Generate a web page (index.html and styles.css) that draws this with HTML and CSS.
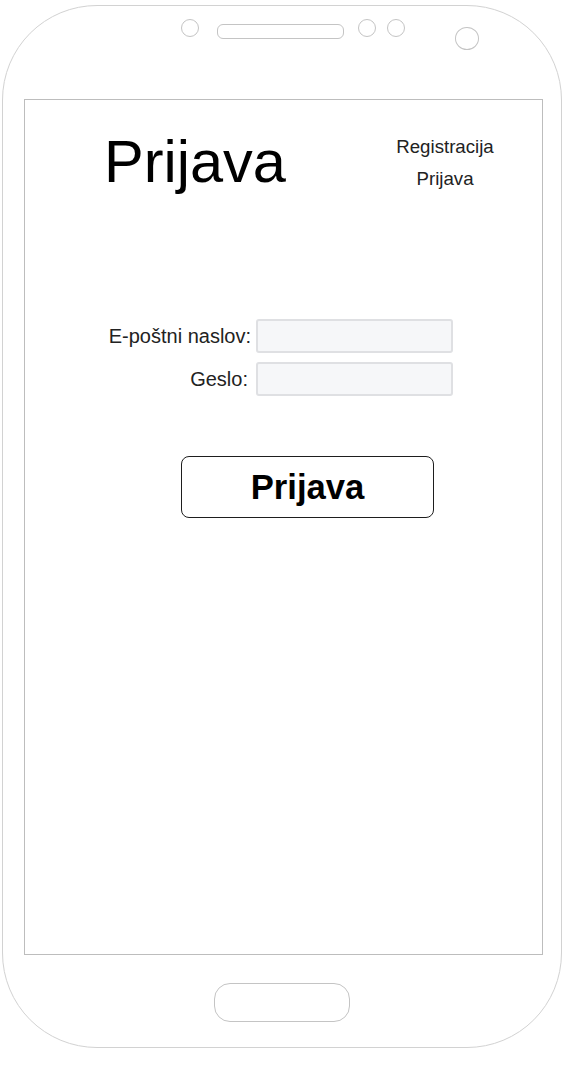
FILE: index.html
```html
<!DOCTYPE html>
<html lang="hr">
<head>
<meta charset="utf-8">
<title>Prijava</title>
<link rel="stylesheet" href="styles.css">
</head>
<body>
<div class="phone">
  <div class="sensors">
    <span class="dot"></span>
    <span class="speaker"></span>
    <span class="dot dot-a"></span>
    <span class="dot dot-b"></span>
    <span class="camera"></span>
  </div>
  <div class="screen">
    <header class="header">
      <h1 class="title">Prijava</h1>
      <nav class="nav">
        <a class="nav-link" href="#">Registracija</a>
        <a class="nav-link" href="#">Prijava</a>
      </nav>
    </header>
    <form class="form">
      <label class="label" for="email">E-poštni naslov:</label>
      <input class="field" id="email" type="email">
      <label class="label label-short" for="pass">Geslo:</label>
      <input class="field" id="pass" type="password">
    </form>
    <button class="btn" type="button">Prijava</button>
  </div>
  <div class="home"></div>
</div>
</body>
</html>
```
FILE: styles.css
```css
* { box-sizing: border-box; }
html, body { margin: 0; padding: 0; background: #fff; }
body { font-family: "Liberation Sans", Arial, sans-serif; color: #222; }

.phone {
  margin: 5px 0 0 2px;
  width: 560px;
  height: 1043px;
  border: 1px solid #d2d2d2;
  border-radius: 95px;
  display: flex;
  flex-direction: column;
}

.sensors {
  display: flex;
  align-items: flex-start;
  height: 31px;
  margin-top: 13px;
  padding-left: 178px;
}
.dot {
  width: 18px;
  height: 18px;
  border: 1px solid #c4c4c4;
  border-radius: 50%;
}
.speaker {
  width: 127px;
  height: 15px;
  margin: 5px 14px 0 18px;
  border: 1px solid #c4c4c4;
  border-radius: 6px;
}
.dot-b { margin-left: 11px; }
.camera {
  width: 24px;
  height: 23px;
  margin: 8px 0 0 50px;
  border: 1px solid #c4c4c4;
  border-radius: 50%;
}

.screen {
  margin: 49px 0 0 21px;
  width: 519px;
  height: 856px;
  border: 1px solid #bdbdbd;
  display: flex;
  flex-direction: column;
  align-items: flex-start;
}

.header {
  display: flex;
  width: 100%;
  padding: 31px 0 0 79px;
}
.title {
  margin: 1px 0 0 0;
  font-size: 59.5px;
  line-height: 1;
  font-weight: normal;
  color: #000;
}
.nav {
  margin-left: auto;
  margin-right: 37px;
  width: 120px;
  display: flex;
  flex-direction: column;
  align-items: center;
}
.nav-link {
  font-size: 18.67px;
  line-height: 32px;
  color: #222;
  text-decoration: none;
}

.form {
  margin: 124px 0 0 0;
  display: grid;
  grid-template-columns: 226px 197px;
  column-gap: 5px;
  row-gap: 9px;
  align-items: center;
}
.label {
  text-align: right;
  font-size: 20px;
  color: #222;
}
.label-short { padding-right: 3px; }
.field {
  width: 197px;
  height: 34px;
  margin: 0;
  border: 2px solid #dfe0e3;
  border-radius: 3px;
  background: #f6f7f9;
}

.btn {
  margin: 60px 0 0 156px;
  width: 253px;
  height: 62px;
  border: 1px solid #1e1e1e;
  border-radius: 8px;
  background: #fff;
  font-family: "Liberation Sans", Arial, sans-serif;
  font-size: 34.67px;
  font-weight: bold;
  color: #000;
  padding: 0;
}

.home {
  margin: 28px 0 0 211px;
  width: 136px;
  height: 39px;
  border: 1px solid #c4c4c4;
  border-radius: 16px;
}
```
